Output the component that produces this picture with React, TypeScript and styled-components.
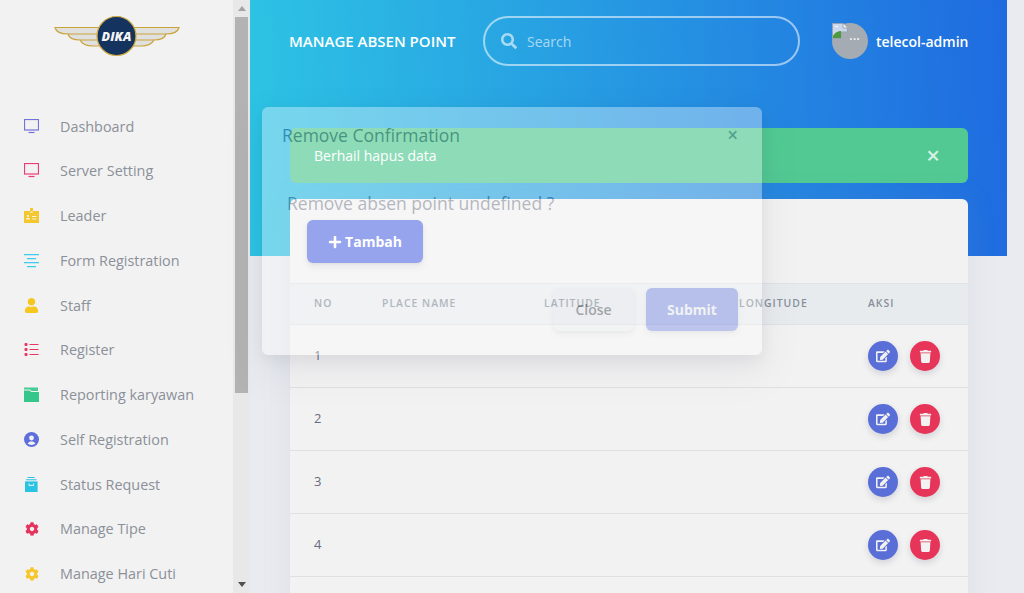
import React from "react";
import styled, { createGlobalStyle } from "styled-components";
import { FaCog, FaEdit, FaPlus, FaSearch, FaTrash, FaUser } from "react-icons/fa";

const GlobalStyle = createGlobalStyle`
  html, body {
    margin: 0;
    height: 100%;
    overflow: hidden;
    font-family: "Open Sans", "Liberation Sans", sans-serif;
    background: #e9ebf0;
  }
  * { box-sizing: border-box; }
`;

const Monitor = () => (
  <svg width="15" height="15" viewBox="0 0 15 15" fill="none" stroke="currentColor">
    <rect x="0.5" y="0.5" width="14" height="10.500" strokeWidth="1.200" />
    <path d="M4.500 13.500h6" strokeWidth="1.200" />
  </svg>
);

const Badge = () => (
  <svg width="15" height="15" viewBox="0 0 15 15" fill="currentColor">
    <path d="M0 3h6V0h3v3h6v12H0z" />
    <path d="M6.200 3.500h2.600v1.300H6.200zM3 7h2v2H3zM2.200 10h3.600v1.600H2.200zM8 8h4.500v1H8zM8 10.400h4.500v1H8z" fill="#f6f0d8" />
  </svg>
);

const AlignLines = () => (
  <svg width="15" height="15" viewBox="0 0 15 15" fill="currentColor">
    <path d="M0 1h15v1.300H0zM3 5h9v1.300H3zM0 9h15v1.300H0zM3 13h9v1.300H3z" />
  </svg>
);

const ListIcon = () => (
  <svg width="15" height="15" viewBox="0 0 15 15" fill="currentColor">
    <rect x="0.500" y="1" width="3" height="3" rx="1" />
    <rect x="0.500" y="6" width="3" height="3" rx="1" />
    <rect x="0.500" y="11" width="3" height="3" rx="1" />
    <path d="M5.500 2h9v1h-9zM5.500 7h9v1h-9zM5.500 12h9v1h-9z" />
  </svg>
);

const Folder = () => (
  <svg width="15" height="15" viewBox="0 0 15 15" fill="currentColor">
    <path d="M0 0.500h14v3.400H7.600L5.800 2.400H0z" opacity="0.9" />
    <path d="M0 3.400h5.400l1.900 1.600H15v10H0z" />
  </svg>
);

const UserBadge = () => (
  <svg width="15" height="15" viewBox="0 0 15 15">
    <circle cx="7.500" cy="7.500" r="7.500" fill="currentColor" />
    <circle cx="7.500" cy="6" r="2.400" fill="#f2f2f2" />
    <path d="M3.600 11.600c.8-1.500 2.200-2.100 3.900-2.100s3.100.6 3.900 2.100c-1 .9-2.400 1.400-3.900 1.400s-2.900-.5-3.900-1.400z" fill="#f2f2f2" />
  </svg>
);

const Archive = () => (
  <svg width="15" height="15" viewBox="0 0 15 15" fill="currentColor">
    <path d="M3.500 0h7v1h-7zM2 2.200h10.500v1H2z" />
    <path d="M1 4.400h12.600V15H1z" />
    <path d="M5 6.600v1.800h4.600V6.600" fill="none" stroke="#f2f2f2" strokeWidth="1" />
  </svg>
);

const Cog = () => <FaCog size={14} />;
const Person = () => <FaUser size={15} />;

const menu = [
  { label: "Dashboard", color: "#7470dd", icon: Monitor },
  { label: "Server Setting", color: "#f0397b", icon: Monitor },
  { label: "Leader", color: "#f4c72e", icon: Badge },
  { label: "Form Registration", color: "#3fcbee", icon: AlignLines },
  { label: "Staff", color: "#f5c71f", icon: Person },
  { label: "Register", color: "#e93560", icon: ListIcon },
  { label: "Reporting karyawan", color: "#34c68a", icon: Folder },
  { label: "Self Registration", color: "#5e6fdc", icon: UserBadge },
  { label: "Status Request", color: "#2ac3e4", icon: Archive },
  { label: "Manage Tipe", color: "#e6335c", icon: Cog },
  { label: "Manage Hari Cuti", color: "#f5c72c", icon: Cog },
];

const Logo = () => (
  <svg width="126" height="42" viewBox="0 0 126 42">
    <g fill="#e0e0de" stroke="#c9a43a" strokeWidth="1.200">
      <path d="M1 12.500h124c-1 4-6 6.500-13 6.500 -1 4-6 6-12 6 -2 4-7 6-13 6H39c-6 0-11-2-13-6 -6 0-11-2-12-6C7 19 2 16.500 1 12.500z" />
      <path d="M14 19h98M26 25h74" fill="none" />
    </g>
    <circle cx="62.500" cy="21" r="19.500" fill="#15335f" stroke="#d0ab42" strokeWidth="1.200" />
    <text x="62.500" y="25.500" textAnchor="middle" fontFamily="'Open Sans', sans-serif" fontSize="12.500" fontStyle="italic" fontWeight="800" fill="#f4f4f4">DIKA</text>
  </svg>
);

const BrokenImage = () => (
  <svg width="16" height="16" viewBox="0 0 16 16">
    <path d="M0.500 0.500h10.500l4.500 4.500v4H9v6.500H0.500z" fill="#c9d8ee" stroke="#9aa3ad" />
    <path d="M11 0.500v4.500h4.500" fill="#f4f6f8" stroke="#9aa3ad" />
    <path d="M2.500 4c1-1.500 3-1.500 4 0z" fill="#fff" />
    <path d="M1 15v-2.500C3 10 6 8 9 8v7z" fill="#4c9a3c" />
  </svg>
);

const rows = [1, 2, 3, 4];

const App = () => {
  return (
    <Page>
      <GlobalStyle />
      <Sidebar>
        <SideContent>
          <LogoWrap>
            <Logo />
          </LogoWrap>
          <Nav>
            {menu.map((item) => (
              <NavItem key={item.label}>
                <NavIcon $color={item.color}>
                  <item.icon />
                </NavIcon>
                {item.label}
              </NavItem>
            ))}
          </Nav>
        </SideContent>
        <Rail>
          <ArrowUp />
          <Thumb />
          <ArrowDown />
        </Rail>
      </Sidebar>

      <Main>
        <Hero>
          <TopBar>
            <PageTitle>MANAGE ABSEN POINT</PageTitle>
            <SearchBox>
              <FaSearch size={16} />
              <SearchInput placeholder="Search" />
            </SearchBox>
            <UserBlock>
              <Avatar>
                <BrokenImage />
                <AltDots>...</AltDots>
              </Avatar>
              <UserName>telecol-admin</UserName>
            </UserBlock>
          </TopBar>
        </Hero>

        <Content>
          <Alert>
            Berhail hapus data
            <AlertClose>×</AlertClose>
          </Alert>
          <Card>
            <CardHead>
              <AddButton>
                <FaPlus size={14} />
                Tambah
              </AddButton>
            </CardHead>
            <Table>
              <thead>
                <tr>
                  <Th $width={92}>No</Th>
                  <Th $width={162}>Place Name</Th>
                  <Th $width={195}>Latitude</Th>
                  <Th $width={129}>Longitude</Th>
                  <Th $width={100}>Aksi</Th>
                </tr>
              </thead>
              <tbody>
                {rows.map((no) => (
                  <tr key={no}>
                    <NoCell>{no}</NoCell>
                    <Td />
                    <Td />
                    <Td />
                    <Td>
                      <Actions>
                        <RoundButton $color="#5a6ed8">
                          <FaEdit size={14} />
                        </RoundButton>
                        <RoundButton $color="#e63558">
                          <FaTrash size={13} />
                        </RoundButton>
                      </Actions>
                    </Td>
                  </tr>
                ))}
              </tbody>
            </Table>
          </Card>
        </Content>
      </Main>

      <Modal>
        <ModalHead>
          <ModalTitle>Remove Confirmation</ModalTitle>
          <ModalClose>×</ModalClose>
        </ModalHead>
        <ModalBody>Remove absen point undefined ?</ModalBody>
        <ModalFoot>
          <CloseButton>Close</CloseButton>
          <SubmitButton>Submit</SubmitButton>
        </ModalFoot>
      </Modal>
    </Page>
  );
};

const Page = styled.div`
  position: relative;
  display: flex;
  width: 1024px;
  height: 593px;
  overflow: hidden;
  background: #e9ebf0;
`;

const Sidebar = styled.aside`
  display: flex;
  flex: none;
  width: 250px;
  height: 593px;
  background: #f2f2f2;
`;

const SideContent = styled.div`
  flex: 1;
  overflow: hidden;
`;

const LogoWrap = styled.div`
  display: flex;
  justify-content: center;
  padding: 15px 0 0 0;
  height: 103.800px;
`;

const Nav = styled.nav`
  display: flex;
  flex-direction: column;
`;

const NavItem = styled.a`
  display: flex;
  align-items: center;
  flex: none;
  height: 44.750px;
  padding-left: 24px;
  font-size: 14.400px;
  color: #8b9099;
`;

const NavIcon = styled.span<{ $color: string }>`
  display: flex;
  align-items: center;
  justify-content: center;
  width: 15px;
  margin-right: 21px;
  color: ${(p) => p.$color};
`;

const Rail = styled.div`
  display: flex;
  flex-direction: column;
  align-items: center;
  flex: none;
  width: 17px;
  background: #e8e8e8;
`;

const ArrowUp = styled.div`
  margin: 6px 0 6px;
  border-left: 4px solid transparent;
  border-right: 4px solid transparent;
  border-bottom: 5px solid #a3a3a3;
`;

const Thumb = styled.div`
  width: 13px;
  height: 376px;
  background: #b3b3b3;
`;

const ArrowDown = styled.div`
  margin-top: auto;
  margin-bottom: 6px;
  border-left: 4px solid transparent;
  border-right: 4px solid transparent;
  border-top: 5px solid #505050;
`;

const Main = styled.main`
  flex: none;
  width: 757px;
`;

const Hero = styled.div`
  height: 256px;
  background: linear-gradient(87deg, #2dc4e4, #1f6be0);
`;

const TopBar = styled.div`
  display: flex;
  align-items: center;
  height: 82px;
  padding: 0 39px;
`;

const PageTitle = styled.div`
  flex: none;
  width: 194px;
  font-size: 15px;
  font-weight: 600;
  color: #fff;
  white-space: nowrap;
`;

const SearchBox = styled.div`
  display: flex;
  align-items: center;
  gap: 10px;
  flex: none;
  width: 317px;
  height: 50px;
  padding: 0 16px;
  border: 2px solid rgba(255, 255, 255, 0.55);
  border-radius: 25px;
  color: rgba(255, 255, 255, 0.6);
`;

const SearchInput = styled.input`
  flex: 1;
  min-width: 0;
  border: 0;
  outline: 0;
  padding: 0;
  background: transparent;
  font-family: inherit;
  font-size: 14px;
  color: #fff;

  &::placeholder {
    color: rgba(255, 255, 255, 0.6);
  }
`;

const UserBlock = styled.div`
  display: flex;
  align-items: center;
  gap: 8px;
  margin-left: 32px;
`;

const Avatar = styled.div`
  display: flex;
  flex: none;
  width: 36px;
  height: 36px;
  border-radius: 50%;
  background: #a5abb2;
`;

const AltDots = styled.span`
  margin-top: 4px;
  margin-left: 1px;
  font-size: 14px;
  line-height: 16px;
  color: #fff;
`;

const UserName = styled.span`
  font-size: 14px;
  font-weight: 600;
  color: #fff;
  white-space: nowrap;
`;

const Content = styled.div`
  margin-top: -128px;
  padding: 0 39px 0 40px;
`;

const Alert = styled.div`
  display: flex;
  align-items: center;
  justify-content: space-between;
  height: 55px;
  padding: 0 28px 0 24px;
  margin-bottom: 16px;
  border-radius: 6px;
  background: #52c993;
  font-size: 14px;
  color: #fff;
`;

const AlertClose = styled.span`
  margin-top: -2px;
  font-size: 24px;
  font-weight: 600;
  line-height: 1;
  color: rgba(255, 255, 255, 0.75);
`;

const Card = styled.section`
  min-height: 500px;
  border-radius: 6px;
  background: #f2f2f2;
  box-shadow: 0 0 30px rgba(136, 152, 170, 0.12);
`;

const CardHead = styled.div`
  padding: 21px 17px 20px;
`;

const AddButton = styled.button`
  display: flex;
  align-items: center;
  justify-content: center;
  gap: 3px;
  width: 116px;
  height: 43px;
  border: 0;
  border-radius: 6px;
  background: #5e72e4;
  box-shadow: 0 4px 6px rgba(50, 50, 93, 0.11), 0 1px 3px rgba(0, 0, 0, 0.08);
  font-family: inherit;
  font-size: 14px;
  font-weight: 700;
  color: #fff;
`;

const Table = styled.table`
  width: 100%;
  table-layout: fixed;
  border-collapse: collapse;
`;

const Th = styled.th<{ $width: number }>`
  width: ${(p) => p.$width}px;
  height: 41px;
  padding: 0 0 2px 24px;
  background: #e8ebee;
  border-top: 1px solid #dfe2e6;
  border-bottom: 1px solid #dfe2e6;
  text-align: left;
  font-size: 10.400px;
  font-weight: 600;
  letter-spacing: 1px;
  text-transform: uppercase;
  color: #87909c;

  &:nth-child(n + 2) {
    padding-left: 0;
  }
`;

const Td = styled.td`
  height: 63px;
  padding: 0;
  border-bottom: 1px solid #dfe0e3;
`;

const NoCell = styled(Td)`
  padding: 0 0 2px 24px;
  font-size: 13px;
  color: #666c7e;
`;

const Actions = styled.div`
  display: flex;
  gap: 12px;
`;

const RoundButton = styled.button<{ $color: string }>`
  display: flex;
  align-items: center;
  justify-content: center;
  width: 30px;
  height: 30px;
  padding: 0;
  border: 0;
  border-radius: 50%;
  background: ${(p) => p.$color};
  box-shadow: 0 3px 6px rgba(50, 50, 93, 0.16);
  color: #f2f2f2;
`;

const Modal = styled.div`
  position: absolute;
  left: 262px;
  top: 107px;
  width: 500px;
  height: 248px;
  border-radius: 6px;
  background: #fff;
  box-shadow: 0 15px 35px rgba(50, 50, 93, 0.2), 0 5px 15px rgba(0, 0, 0, 0.17);
  opacity: 0.35;
`;

const ModalHead = styled.div`
  display: flex;
  align-items: center;
  justify-content: space-between;
  height: 55px;
  padding: 0 24px 0 20px;
`;

const ModalTitle = styled.h5`
  margin: 0;
  font-size: 17.500px;
  font-weight: 400;
  color: #32325d;
`;

const ModalClose = styled.span`
  font-size: 19px;
  font-weight: 600;
  color: #525f7f;
`;

const ModalBody = styled.p`
  margin: 0;
  padding: 29px 0 0 25px;
  height: 126px;
  font-size: 17.500px;
  color: #3f4862;
`;

const ModalFoot = styled.div`
  display: flex;
  justify-content: flex-end;
  gap: 12px;
  padding-right: 24px;
`;

const CloseButton = styled.button`
  width: 81px;
  height: 43px;
  border: 0;
  border-radius: 6px;
  background: #f4f5f7;
  box-shadow: 0 4px 6px rgba(50, 50, 93, 0.11), 0 1px 3px rgba(0, 0, 0, 0.08);
  font-family: inherit;
  font-size: 14px;
  font-weight: 600;
  color: #212529;
`;

const SubmitButton = styled(CloseButton)`
  width: 92px;
  background: #5e72e4;
  font-weight: 700;
  color: #fff;
`;

export default App;
